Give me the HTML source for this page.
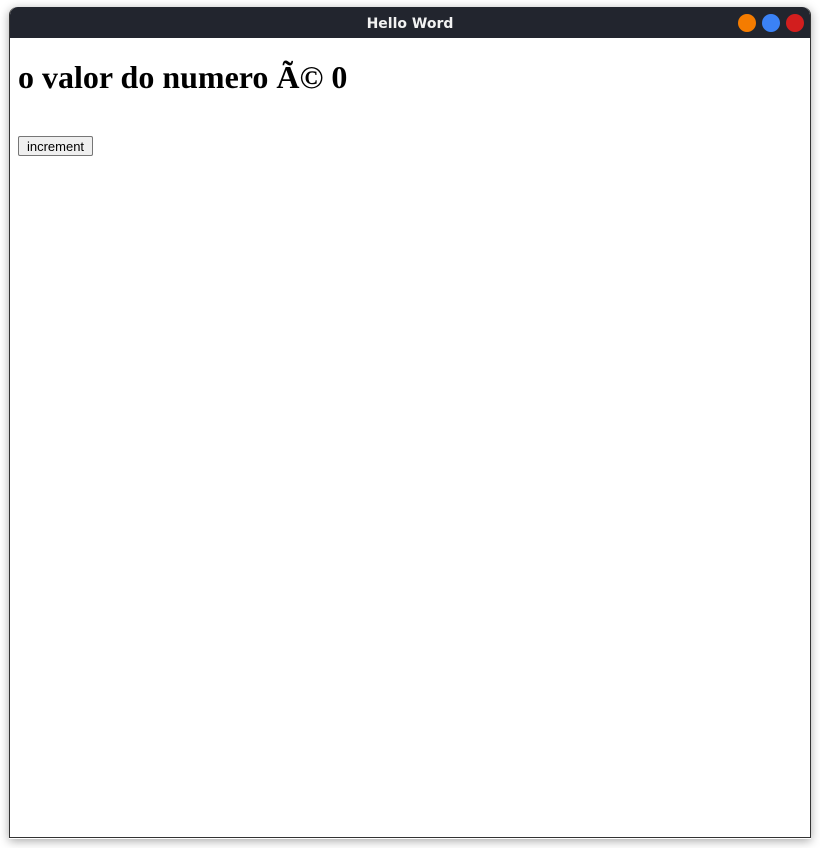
<!DOCTYPE html>
<html><head><meta charset="utf-8"><style>
html,body{margin:0;padding:0;width:820px;height:848px;background:#fff;overflow:hidden;position:relative}
.shadow{position:absolute;left:9px;top:7px;width:802px;height:832px;border-radius:8px 8px 0 0;box-shadow:0 2px 10px rgba(0,0,0,.35)}
.win{position:absolute;left:9px;top:7px;width:800px;height:830px;border:1px solid #333;border-top:none;border-radius:8px 8px 0 0;background:#fff;overflow:hidden}
.bar{position:absolute;left:0;top:0;width:800px;height:31px;background:#22252e;border-radius:8px 8px 0 0}
.title{position:absolute;left:0;width:800px;top:9px;text-align:center;color:#f2f2f2;font:bold 14px "DejaVu Sans","Liberation Sans",sans-serif}
.dot{position:absolute;top:7px;width:18px;height:18px;border-radius:50%}
h1{position:absolute;left:8px;top:52px;margin:0;font:bold 32px "Liberation Serif",serif;line-height:37px;white-space:nowrap}
button{position:absolute;left:8px;top:129px;width:75px;height:20px;padding:0;font:13px "Liberation Sans",sans-serif;background:#efefef;border:1px solid #767676;border-radius:2px;color:#000}
</style></head><body>
<div class="shadow"></div>
<div class="win">
<div class="bar"><div class="title">Hello Word</div>
<div class="dot" style="left:728px;background:#f57c00"></div>
<div class="dot" style="left:752px;background:#3b82f6"></div>
<div class="dot" style="left:776px;background:#d21e1e"></div>
</div>
<h1>o valor do numero Ã© 0</h1>
<button>increment</button>
</div>
</body></html>
